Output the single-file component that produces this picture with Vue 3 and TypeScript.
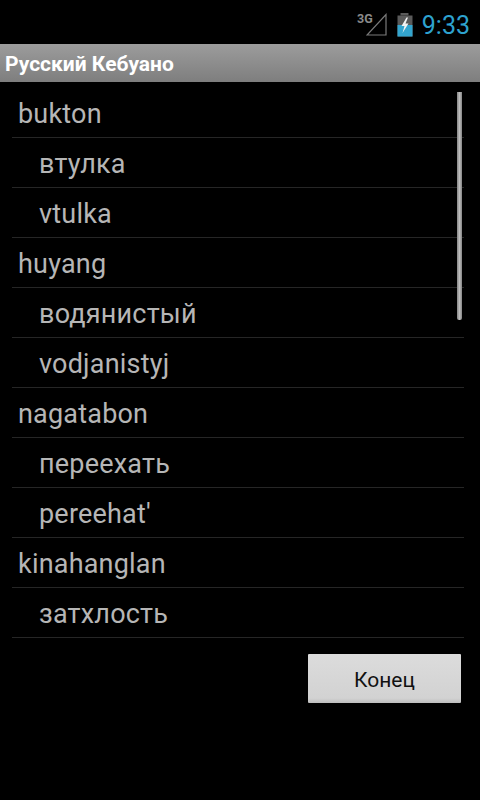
<script setup lang="ts">
interface Row { text: string; sub: boolean }
const rows: Row[] = [
  { text: 'bukton', sub: false },
  { text: 'втулка', sub: true },
  { text: 'vtulka', sub: true },
  { text: 'huyang', sub: false },
  { text: 'водянистый', sub: true },
  { text: 'vodjanistyj', sub: true },
  { text: 'nagatabon', sub: false },
  { text: 'переехать', sub: true },
  { text: "pereehat'", sub: true },
  { text: 'kinahanglan', sub: false },
  { text: 'затхлость', sub: true },
]
</script>

<template>
  <div class="screen">
    <header class="status">
      <span class="net">3G</span>
      <svg class="signal" width="21" height="23" viewBox="0 0 21 23">
        <path d="M20 1.5 L20 22 L1 22 Z" fill="none" stroke="#7a7a7a" stroke-width="1.2" />
      </svg>
      <svg class="battery" width="16" height="24" viewBox="0 0 16 24">
        <rect x="3.5" y="0" width="8" height="2.5" fill="#5a5a5a" />
        <rect x="0.5" y="2.5" width="15" height="21" fill="#5a5a5a" />
        <rect x="0.5" y="12" width="15" height="11.5" fill="#33a5cf" />
        <path d="M9.5 4.5 L4.5 13 L7.5 13 L5.5 20 L11.5 10.5 L8.5 10.5 L11 4.5 Z" fill="#f2f2f2" />
      </svg>
      <span class="clock">9:33</span>
    </header>
    <div class="titlebar">Русский Кебуано</div>
    <div class="content">
      <ul class="list">
        <li v-for="(r, i) in rows" :key="i" class="row" :class="{ sub: r.sub }">{{ r.text }}</li>
      </ul>
      <div class="thumb"></div>
    </div>
    <div class="actions">
      <button class="end" type="button">Конец</button>
    </div>
  </div>
</template>

<style scoped>
.screen {
  width: 480px;
  height: 800px;
  background: #000;
  display: flex;
  flex-direction: column;
  overflow: hidden;
  font-family: Roboto, "Liberation Sans", sans-serif;
}
.status {
  height: 44px;
  box-sizing: border-box;
  display: flex;
  align-items: flex-start;
  justify-content: flex-end;
  padding: 13px 10px 0 0;
  flex: none;
}
.net {
  font-size: 12.5px;
  font-weight: 700;
  color: #8a8a8a;
  line-height: 10px;
  margin-top: 1px;
}
.signal {
  margin-left: -7px;
}
.battery {
  margin-left: 10px;
}
.clock {
  font-size: 25px;
  line-height: 26px;
  color: #33b5e5;
  margin-left: 9px;
  font-weight: 400;
  opacity: 0.9;
}
.titlebar {
  flex: none;
  height: 38px;
  box-sizing: border-box;
  padding-left: 5px;
  line-height: 40px;
  font-size: 21px;
  font-weight: 700;
  color: #fff;
  background: linear-gradient(#9c9c9c, #7e7e7e);
  white-space: nowrap;
}
.content {
  position: relative;
  flex: none;
  height: 556px;
  padding: 6px 16px 0 12px;
  box-sizing: border-box;
}
.list {
  list-style: none;
  margin: 0;
  padding: 0;
}
.row {
  height: 50px;
  box-sizing: border-box;
  border-bottom: 1px solid #262626;
  padding-left: 6px;
  font-size: 27px;
  line-height: 52px;
  letter-spacing: 0.2px;
  color: #b6b6b6;
}
.row.sub {
  padding-left: 27px;
}
.thumb {
  position: absolute;
  left: 457px;
  top: 10px;
  width: 5px;
  height: 228px;
  border-radius: 0 0 2px 2px;
  background: linear-gradient(90deg, #858585, #bdbdbd 50%, #858585);
}
.actions {
  flex: none;
  display: flex;
  justify-content: flex-end;
  padding: 16px 19px 0 0;
}
.end {
  width: 153px;
  height: 49px;
  padding: 2px 0 0;
  border: 0;
  border-radius: 1px;
  background: linear-gradient(#dcdcdc, #d2d2d2 90%, #bdbdbd);
  font-family: Roboto, "Liberation Sans", sans-serif;
  font-size: 21px;
  color: #111;
}
</style>
